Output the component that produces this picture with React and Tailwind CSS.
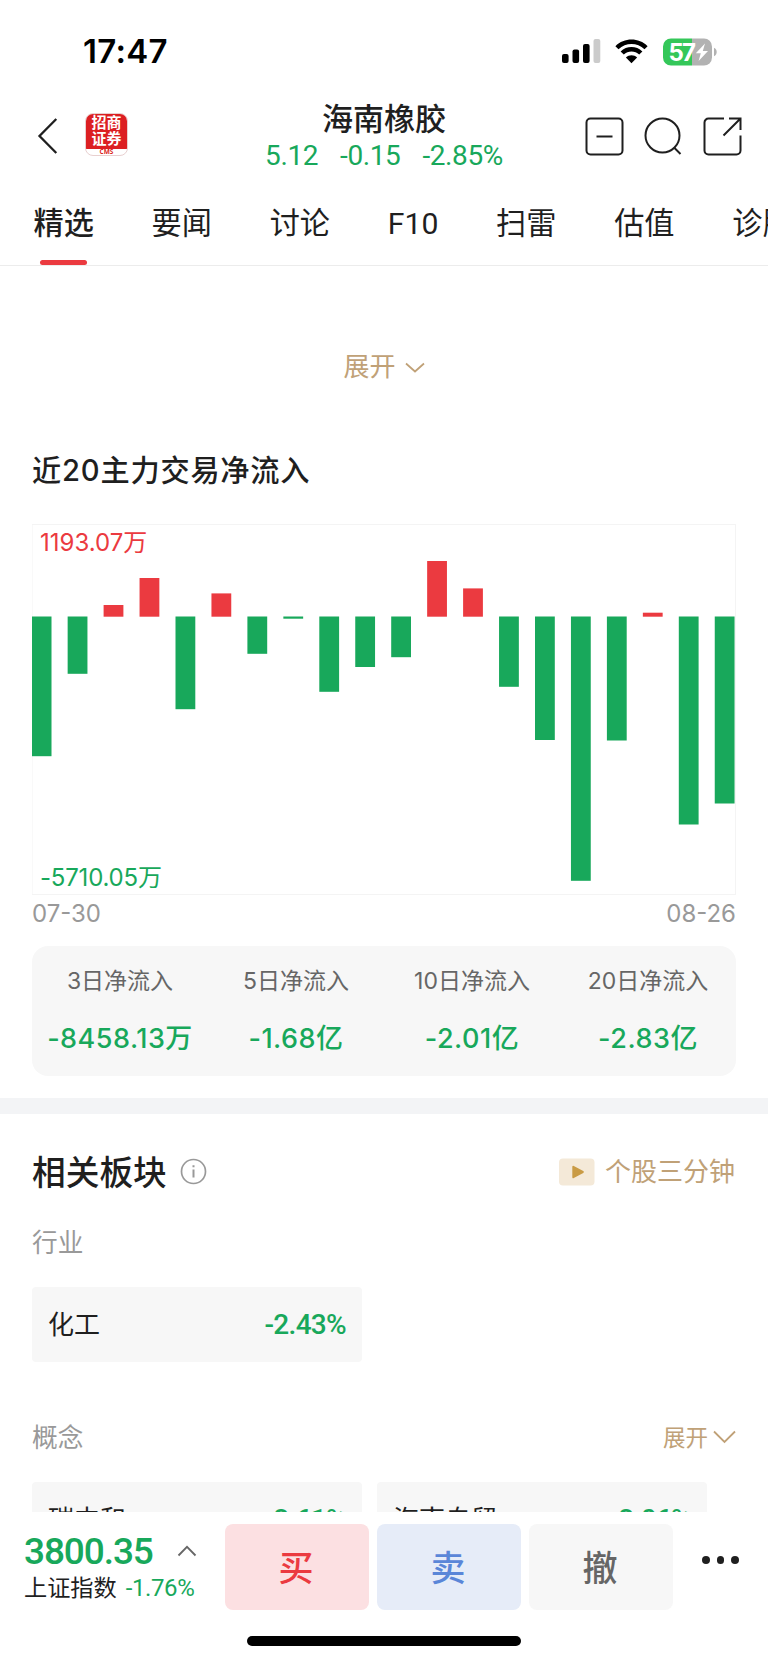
import React from "react";

const CJK = "font-['Inter','Noto_Sans_CJK_SC',sans-serif]";
const DIN = "font-['Roboto','Noto_Sans_CJK_SC',sans-serif]";

const TABS = ["精选", "要闻", "讨论", "F10", "扫雷", "估值", "诊股"];

// Signed bar lengths in pixels; positive values rise above the zero line.
const FLOWS = [
  -139.7, -57.3, 11.7, 38.7, -92.7, 23.3, -37.3, -2.2, -75.3, -50.5,
  -40.7, 55.7, 28.3, -70.3, -123.5, -264.3, -124, 4, -208, -187,
];

const SUMMARY = [
  ["3日净流入", "-8458.13万"],
  ["5日净流入", "-1.68亿"],
  ["10日净流入", "-2.01亿"],
  ["20日净流入", "-2.83亿"],
];

function StatusBar() {
  return (
    <div className="flex h-[103px] items-center pl-[83px] pr-[51px]">
      <div className="font-['Inter',sans-serif] text-[33px] font-semibold leading-none tracking-[0.3px] text-black">17:47</div>
      <svg className="ml-auto" width="30" height="26" viewBox="0 0 30 26">
        <rect x="0" y="15" width="6.6" height="9" rx="2" />
        <rect x="10.5" y="10.5" width="6.6" height="13.5" rx="2" />
        <rect x="21" y="5" width="6.6" height="19" rx="2" />
      </svg>
      <svg className="ml-[1px]" width="8" height="26" viewBox="0 0 8 26">
        <rect x="0.5" y="0" width="6.8" height="24" rx="2" fill="#cbcbcb" />
      </svg>
      <svg className="ml-[14px] mr-[1px]" width="33" height="26" viewBox="0 0 33 26">
        <path d="M0.4 7.2C9.2-1.6 23.8-1.6 32.6 7.2L29.5 10.3C22.3 3.3 10.7 3.3 3.5 10.3Z" />
        <path d="M5.6 12.4C11.6 6.5 21.4 6.5 27.4 12.4L24.2 15.6C20 11.4 13 11.4 8.8 15.6Z" />
        <path d="M16.5 24.3L10.9 18.6C14 15.6 19 15.6 22.1 18.6Z" />
      </svg>
      <svg className="ml-[14px]" width="54" height="28" viewBox="0 0 54 28">
        <path d="M8 0.5H29V27.5H8A8 8 0 0 1 0 19.5V8.5A8 8 0 0 1 8 0.5Z" fill="#34c759" />
        <path d="M29 0.5H41A8 8 0 0 1 49 8.5V19.5A8 8 0 0 1 41 27.5H29Z" fill="#b2b2b2" />
        <path d="M51 9.8C54.6 11 54.6 17 51 18.2Z" fill="#b2b2b2" />
        <text x="5.5" y="22.6" fontFamily="Inter" fontWeight="700" fontSize="24" letterSpacing="-1.8" fill="#fff">57</text>
        <path d="M42 5.5L32.8 15.3H37.8L35.6 23L45 13H39.8Z" fill="#fff" />
      </svg>
    </div>
  );
}

function Header() {
  return (
    <div className="grid h-[66px] grid-cols-[1fr_auto_1fr] grid-rows-[66px] items-center">
      <div className="flex items-center pl-[37px]">
        <svg width="22" height="38" viewBox="0 0 22 38" fill="none" stroke="#1f1f1f" strokeWidth="2.3">
          <path d="M19.3 2L2.5 19L19.3 36" />
        </svg>
        <div className="ml-[26px] mt-[-4px] flex h-[43px] w-[43px] flex-col overflow-hidden rounded-[8px] border border-[#e8d0d0] bg-white">
          <div className="flex h-[35px] shrink-0 flex-col items-center justify-center bg-[#dc1f22] text-[15px] font-bold leading-[16px] text-white">
            <span>招商</span>
            <span>证券</span>
          </div>
          <div className="text-center font-['Open_Sans',sans-serif] text-[6.5px] font-bold leading-[6px] text-[#dc1f22]">CMS</div>
        </div>
      </div>
      <div className="flex flex-col items-center">
        <div className="h-[37px] shrink-0 text-[31px] font-medium leading-[39px] text-[#1f1f1f]">海南橡胶</div>
        <div className={DIN + " flex h-[37px] shrink-0 gap-[22px] text-[28px] leading-[40px] tracking-[-0.4px] text-[#18a85b]"}>
          <span>5.12</span>
          <span>-0.15</span>
          <span>-2.85%</span>
        </div>
      </div>
      <div className="flex items-center justify-end gap-[20px] pr-[26px]">
        <svg width="39" height="39" viewBox="0 0 39 39" fill="none" stroke="#1f1f1f" strokeWidth="2">
          <rect x="1.5" y="1.5" width="36" height="36" rx="4" />
          <path d="M11.5 19.5H27.5" />
        </svg>
        <svg width="39" height="39" viewBox="0 0 39 39" fill="none" stroke="#1f1f1f" strokeWidth="2">
          <circle cx="18.5" cy="18.5" r="17" />
          <path d="M30 30.5L36.5 37" />
        </svg>
        <svg width="39" height="39" viewBox="0 0 39 39" fill="none" stroke="#1f1f1f" strokeWidth="2">
          <path d="M21 1.5H5.5A4 4 0 0 0 1.5 5.5V33.5A4 4 0 0 0 5.5 37.5H33.5A4 4 0 0 0 37.5 33.5V18.5" />
          <path d="M26 1.5H37.5V13M37 2L20.5 18.5" />
        </svg>
      </div>
    </div>
  );
}

function Tabs() {
  return (
    <div className="flex h-[97px] gap-[57.7px] overflow-hidden border-b border-[#ececec] pl-[33.5px] pt-[36px]">
      {TABS.map((t, i) => (
        <div key={t} className="flex shrink-0 flex-col items-center">
          <div
            className={
              DIN + " h-[38px] text-[30.2px] leading-[38px] text-[#1f1f1f] " + (i === 0 ? "font-medium" : "font-normal")
            }
          >
            {t}
          </div>
          {i === 0 && <div className="mt-[17px] h-[6px] w-[47px] rounded-full bg-[#eb3a40]" />}
        </div>
      ))}
    </div>
  );
}

function FlowChart() {
  return (
    <div className="relative mx-[32px] h-[371px]">
      <svg className="block" width="704" height="371" viewBox="0 0 704 371">
        <rect x="0" y="0.5" width="703.5" height="370" fill="none" stroke="#f4f4f4" />
        {FLOWS.map((v, i) => (
          <rect
            key={i}
            x={-0.3 + i * 35.95}
            y={v > 0 ? 92.7 - v : 92.5}
            width="19.8"
            height={Math.abs(v)}
            fill={v > 0 ? "#eb3a40" : "#18a85b"}
          />
        ))}
      </svg>
      <div className="absolute left-[8px] top-[4px] text-[24px] leading-[30px] text-[#eb3a40]">1193.07万</div>
      <div className="absolute bottom-[2px] left-[8px] text-[24px] leading-[30px] tracking-[-0.2px] text-[#18a85b]">-5710.05万</div>
    </div>
  );
}

function SectorCard({ name, change }) {
  return (
    <div className="flex h-[75px] w-[330px] items-center justify-between rounded-[4px] bg-[#f7f7f7] px-[16px]">
      <span className="text-[26px] leading-[36px] text-[#1f1f1f]">{name}</span>
      <span className={DIN + " text-[28px] font-medium leading-[36px] tracking-[-0.7px] text-[#18a85b]"}>{change}</span>
    </div>
  );
}

function BottomBar() {
  return (
    <div className="h-[151px] bg-white pt-[12px]">
      <div className="flex h-[86px] pl-[24px]">
        <div className="w-[201px]">
          <div className="flex h-[54px] items-center">
            <span className={DIN + " w-[153px] pt-[2px] text-[37px] font-medium leading-[54px] tracking-[-1.1px] text-[#18a85b]"}>3800.35</span>
            <svg width="20" height="12" viewBox="0 0 20 12" fill="none" stroke="#666" strokeWidth="1.8">
              <path d="M1.5 10.5L10 1.8L18.5 10.5" />
            </svg>
          </div>
          <div className="flex h-[20px] items-center gap-[9px] leading-[20px]">
            <span className="text-[23.2px] text-[#1f1f1f]">上证指数</span>
            <span className={DIN + " text-[24px] tracking-[-0.4px] text-[#18a85b]"}>-1.76%</span>
          </div>
        </div>
        <div className="flex gap-[8px] text-[35px] font-medium">
          <div className="flex w-[144px] items-center justify-center rounded-[8px] bg-[#fce0e2] pr-[2px] pt-[2px] text-[#eb3a40]">买</div>
          <div className="flex w-[144px] items-center justify-center rounded-[8px] bg-[#e6ecf8] pr-[2px] pt-[2px] text-[#5a86d8]">卖</div>
          <div className="flex w-[144px] items-center justify-center rounded-[8px] bg-[#f7f7f7] pr-[2px] pt-[2px] text-[#666]">撤</div>
        </div>
        <div className="ml-[29px] mt-[32px] flex h-[8px] gap-[7px]">
          <span className="h-[7.5px] w-[7.5px] rounded-full bg-[#1f1f1f]" />
          <span className="h-[7.5px] w-[7.5px] rounded-full bg-[#1f1f1f]" />
          <span className="h-[7.5px] w-[7.5px] rounded-full bg-[#1f1f1f]" />
        </div>
      </div>
      <div className="mx-auto mt-[26px] h-[10px] w-[274px] rounded-full bg-black" />
    </div>
  );
}

export default function App() {
  return (
    <div className={CJK + " h-[1663px] w-[768px] overflow-hidden bg-white text-[#1f1f1f]"}>
      <StatusBar />
      <Header />
      <Tabs />
      <div className="h-[1246px] overflow-hidden">
        <div className="flex h-[202px] items-center justify-center gap-[9px] text-[26px] leading-none text-[#c0a177]">
          <span>展开</span>
          <svg width="20" height="11" viewBox="0 0 20 11" fill="none" stroke="#c0a177" strokeWidth="1.7">
            <path d="M1 1.5L10 9.5L19 1.5" />
          </svg>
        </div>
        <h2 className="mb-[34px] h-[22px] pl-[32px] text-[29.2px] font-medium leading-[6px] tracking-[0.8px]">近20主力交易净流入</h2>
        <FlowChart />
        <div className="flex h-[51px] justify-between px-[32px] text-[24px] leading-[38px] text-[#999]">
          <span>07-30</span>
          <span>08-26</span>
        </div>
        <div className="mx-[32px] grid h-[130px] grid-cols-4 rounded-[16px] bg-[#f7f7f7] pt-[17px] text-center">
          {SUMMARY.map(([label, value]) => (
            <div key={label}>
              <div className="h-[58px] text-[23px] leading-[36px] text-[#666]">{label}</div>
              <div className="whitespace-nowrap text-[27px] font-medium leading-[36px] tracking-[0.5px] text-[#18a85b]">{value}</div>
            </div>
          ))}
        </div>
        <div className="mt-[22px] h-[16px] bg-[#f3f4f6]" />
        <div className="flex h-[115px] items-center pl-[32px] pr-[33px]">
          <h2 className="pt-[2px] text-[33.7px] font-medium leading-[44px]">相关板块</h2>
          <svg className="ml-[13px]" width="27" height="27" viewBox="0 0 27 27" fill="none" stroke="#999" strokeWidth="1.7">
            <circle cx="13.5" cy="13.5" r="12" />
            <path d="M13.5 11.5V19.5M13.5 7.3V9.3" strokeWidth="2" />
          </svg>
          <svg className="ml-auto" width="36" height="28" viewBox="0 0 36 28">
            <rect x="0" y="0.5" width="35.5" height="27" rx="4" fill="#f4e9d8" />
            <path d="M14.3 8.8L23.8 14L14.3 19.2Z" fill="#c99b45" stroke="#c99b45" strokeWidth="2" strokeLinejoin="round" />
          </svg>
          <span className="ml-[10px] pt-px text-[26px] leading-[36px] text-[#c0a177]">个股三分钟</span>
        </div>
        <div className="h-[58px] pl-[32px] text-[25.7px] leading-[28px] text-[#999]">行业</div>
        <div className="px-[32px]">
          <SectorCard name="化工" change="-2.43%" />
        </div>
        <div className="mt-[57px] flex h-[36px] items-center px-[32px]">
          <span className="pt-[2px] text-[25.7px] text-[#999]">概念</span>
          <span className="ml-auto pt-px text-[22.5px] text-[#c0a177]">展开</span>
          <svg className="ml-[5px]" width="23" height="14" viewBox="0 0 23 14" fill="none" stroke="#c0a177" strokeWidth="1.8">
            <path d="M1 1.5L11.5 12L22 1.5" />
          </svg>
        </div>
        <div className="mt-[27px] flex gap-[15px] px-[32px]">
          <SectorCard name="碳中和" change="-2.61%" />
          <SectorCard name="海南自贸" change="-2.06%" />
        </div>
      </div>
      <BottomBar />
    </div>
  );
}
